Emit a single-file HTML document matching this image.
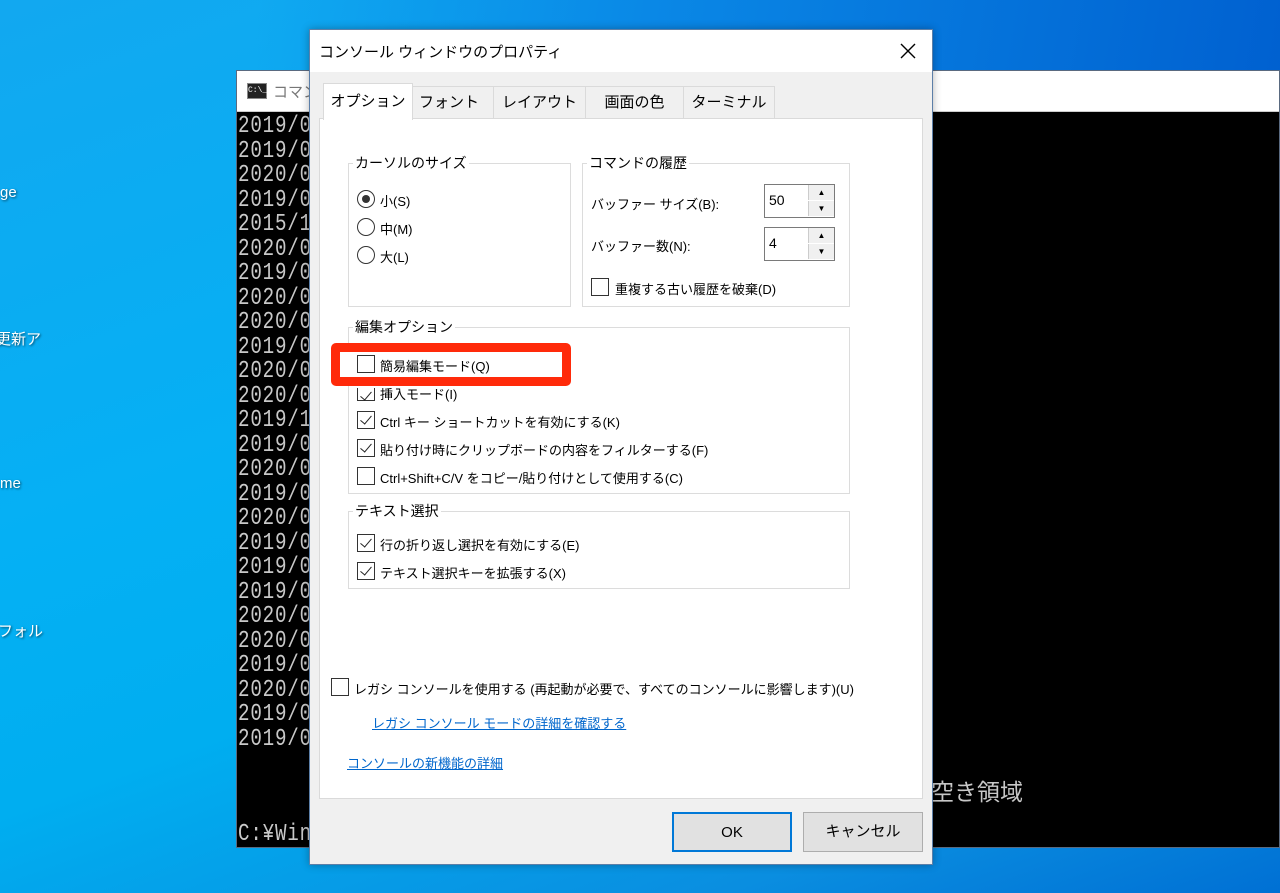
<!DOCTYPE html>
<html><head><meta charset="utf-8"><style>
*{margin:0;padding:0;box-sizing:border-box}
body{width:1280px;height:893px;overflow:hidden;position:relative;font-family:"Liberation Sans","Noto Sans CJK JP",sans-serif;background:linear-gradient(160deg,#12a8f0 0%,#05b0f4 40%,#00aef0 60%,#0a8ee0 85%,#0070d4 100%)}
.a{position:absolute}
.topg{left:0;top:0;width:1280px;height:120px;background:linear-gradient(100deg,rgba(0,0,0,0) 20%,#0a88e6 50%,#0060d0 100%)}
.ico{color:#fff;font-size:15px;text-shadow:1px 1px 2px rgba(0,0,0,.6)}
.con{left:236px;top:70px;width:1044px;height:778px;background:#000;border:1px solid #5a6a80}
.conbar{left:0;top:0;width:100%;height:41px;background:#fff;border-bottom:1px solid #ccc}
.lines{left:1px;top:44px;color:#c8c8c8;font-family:"Liberation Mono",monospace;font-size:24px;line-height:24.5px;transform:scaleX(.8);transform-origin:left top;letter-spacing:1px}
.dlg{left:309px;top:29px;width:624px;height:836px;background:#f0f0f0;border:1px solid #5c7fa8;box-shadow:0 0 8px rgba(0,0,0,.3)}
.tbar{left:0;top:0;width:100%;height:42px;background:#fff}
.t{font-size:13px;color:#000;white-space:nowrap}
.tab{top:56px;height:33px;border:1px solid #dadada;border-bottom:none;background:#f0f0f0;font-size:15px;text-align:center;line-height:32px}
.panel{left:9px;top:88px;width:604px;height:681px;background:#fff;border:1px solid #dadada}
.grp{border:1px solid #dcdcdc}
.lg{background:#fff;padding:0 2px;font-size:14px;top:-9px;left:4px;line-height:16px}
.cb{width:18px;height:18px;border:1px solid #333;background:#fff}
.cb.k::after{content:"";position:absolute;left:5px;top:1px;width:5px;height:10px;border-right:1.5px solid #222;border-bottom:1.5px solid #222;transform:rotate(40deg)}
.rd{width:18px;height:18px;border:1px solid #333;border-radius:50%;background:#fff}
.spin{width:71px;height:34px;border:1px solid #7a7a7a;background:#fff}
.sb{right:0;width:26px;height:15px;background:#f0f0f0;border-left:1px solid #ccc;font-size:8px;text-align:center;line-height:15px}
.lnk{color:#0066cc;text-decoration:underline;font-size:13px}
.btn{top:782px;width:120px;height:40px;background:#e1e1e1;border:1px solid #adadad;font-size:15px;text-align:center;line-height:38px}
</style></head><body>
<div class="a topg"></div>
<div class="a ico" style="left:0;top:184px">ge</div>
<div class="a ico" style="left:-4px;top:328px">更新ア</div>
<div class="a ico" style="left:0;top:475px">me</div>
<div class="a ico" style="left:-2px;top:620px">フォル</div>

<div class="a con">
 <div class="a conbar">
  <div class="a" style="left:10px;top:12px;width:20px;height:16px;background:#222;border:1px solid #888;color:#fff;font-size:8px;line-height:14px;font-family:'Liberation Mono'">C:\_</div>
  <div class="a t" style="left:36px;top:10px;color:#777;font-size:15px">コマンド</div>
 </div>
 <div class="a lines">2019/0<br>2019/0<br>2020/0<br>2019/0<br>2015/1<br>2020/0<br>2019/0<br>2020/0<br>2020/0<br>2019/0<br>2020/0<br>2020/0<br>2019/1<br>2019/0<br>2020/0<br>2019/0<br>2020/0<br>2019/0<br>2019/0<br>2019/0<br>2020/0<br>2020/0<br>2019/0<br>2020/0<br>2019/0<br>2019/0</div>
 <div class="a lines" style="top:752px">C:¥Win</div>
 <div class="a" style="left:694px;top:702px;color:#c8c8c8;font-size:23px">空き領域</div>
</div>

<div class="a dlg">
 <div class="a tbar">
  <div class="a t" style="left:9px;top:11px;font-size:15px">コンソール ウィンドウのプロパティ</div>
  <svg class="a" style="left:590px;top:13px" width="16" height="16"><path d="M1 1L15 15M15 1L1 15" stroke="#000" stroke-width="1.4"/></svg>
 </div>
 <div class="a tab" style="left:94px;width:90px">フォント</div>
 <div class="a tab" style="left:183px;width:93px">レイアウト</div>
 <div class="a tab" style="left:275px;width:99px">画面の色</div>
 <div class="a tab" style="left:373px;width:92px">ターミナル</div>
 <div class="a panel">
  <div class="a grp" style="left:28px;top:44px;width:223px;height:144px"><div class="a lg">カーソルのサイズ</div></div>
  <div class="a rd" style="left:37px;top:71px"></div><div class="a" style="left:42px;top:76px;width:8px;height:8px;border-radius:50%;background:#333"></div>
  <div class="a t" style="left:60px;top:72px">小(S)</div>
  <div class="a rd" style="left:37px;top:99px"></div><div class="a t" style="left:60px;top:100px">中(M)</div>
  <div class="a rd" style="left:37px;top:127px"></div><div class="a t" style="left:60px;top:128px">大(L)</div>

  <div class="a grp" style="left:262px;top:44px;width:268px;height:144px"><div class="a lg">コマンドの履歴</div></div>
  <div class="a t" style="left:271px;top:75px">バッファー サイズ(B):</div>
  <div class="a spin" style="left:444px;top:65px"><div class="a t" style="left:4px;top:7px;font-size:14px">50</div><div class="a sb" style="top:0">▲</div><div class="a sb" style="top:16px">▼</div></div>
  <div class="a t" style="left:271px;top:117px">バッファー数(N):</div>
  <div class="a spin" style="left:444px;top:108px"><div class="a t" style="left:4px;top:7px;font-size:14px">4</div><div class="a sb" style="top:0">▲</div><div class="a sb" style="top:16px">▼</div></div>
  <div class="a cb" style="left:271px;top:159px"></div><div class="a t" style="left:295px;top:160px">重複する古い履歴を破棄(D)</div>

  <div class="a grp" style="left:28px;top:208px;width:502px;height:167px"><div class="a lg">編集オプション</div></div>
  <div class="a" style="left:11px;top:224px;width:240px;height:43px;border:9px solid #ff2a0a;border-radius:5px;background:#fff"></div>
  <div class="a cb" style="left:37px;top:236px"></div><div class="a t" style="left:60px;top:237px">簡易編集モード(Q)</div>
  <div class="a cb k" style="left:37px;border-top:none;height:13px;top:269px"></div><div class="a t" style="left:60px;top:265px;clip-path:inset(4px 0 0 0)">挿入モード(I)</div>
  <div class="a cb k" style="left:37px;top:292px"></div><div class="a t" style="left:60px;top:293px">Ctrl キー ショートカットを有効にする(K)</div>
  <div class="a cb k" style="left:37px;top:320px"></div><div class="a t" style="left:60px;top:321px">貼り付け時にクリップボードの内容をフィルターする(F)</div>
  <div class="a cb" style="left:37px;top:348px"></div><div class="a t" style="left:60px;top:349px">Ctrl+Shift+C/V をコピー/貼り付けとして使用する(C)</div>

  <div class="a grp" style="left:28px;top:392px;width:502px;height:78px"><div class="a lg">テキスト選択</div></div>
  <div class="a cb k" style="left:37px;top:415px"></div><div class="a t" style="left:60px;top:416px">行の折り返し選択を有効にする(E)</div>
  <div class="a cb k" style="left:37px;top:443px"></div><div class="a t" style="left:60px;top:444px">テキスト選択キーを拡張する(X)</div>

  <div class="a cb" style="left:11px;top:559px"></div><div class="a t" style="left:34px;top:560px">レガシ コンソールを使用する (再起動が必要で、すべてのコンソールに影響します)(U)</div>
  <div class="a lnk" style="left:52px;top:594px">レガシ コンソール モードの詳細を確認する</div>
  <div class="a lnk" style="left:27px;top:634px">コンソールの新機能の詳細</div>
 </div>
 <div class="a" style="left:13px;top:53px;width:90px;height:37px;background:#fff;border:1px solid #dadada;border-bottom:none;font-size:15px;text-align:center;line-height:36px">オプション</div>
 <div class="a btn" style="left:362px;border:2px solid #0078d7">OK</div>
 <div class="a btn" style="left:493px">キャンセル</div>
</div>
</body></html>
